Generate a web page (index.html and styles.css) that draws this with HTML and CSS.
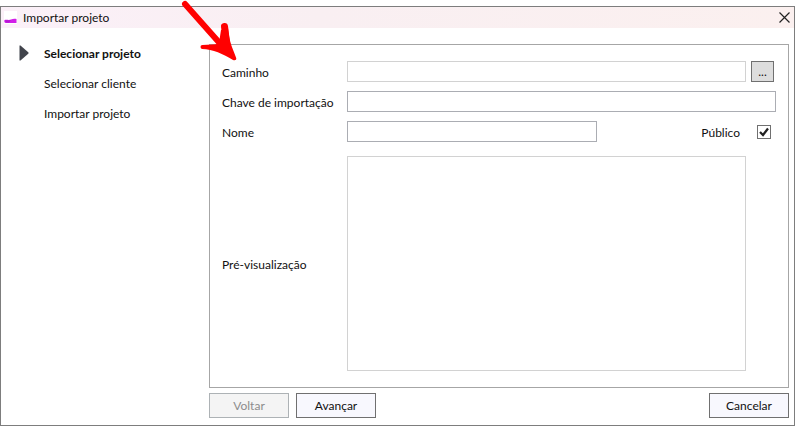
FILE: index.html
```html
<!DOCTYPE html>
<html lang="pt">
<head>
<meta charset="utf-8">
<title>Importar projeto</title>
<link rel="stylesheet" href="styles.css">
</head>
<body>
<div class="window">
  <header class="titlebar">
    <svg class="app-icon" width="13" height="13" viewBox="0 0 13 13" aria-hidden="true">
      <rect width="13" height="13" fill="#fff"/>
      <path d="M.5 9C3 8.500 5 9.500 7 8.500C9 7.500 11 7.500 12.500 8V12H2C.3 12 0 10 .5 9Z" fill="#d21ee8"/>
      <path d="M1 9.500C3 9 5 9.800 7 9L5 11.500H2Z" fill="#b416d2"/>
    </svg>
    <h1 class="title">Importar projeto</h1>
    <button class="close" type="button" aria-label="Fechar">
      <svg width="11" height="11" viewBox="0 0 11 11"><path d="M.5 .5L10.500 10.500M10.500 .5L.5 10.500" stroke="#222" stroke-width="1.200"/></svg>
    </button>
  </header>
  <form class="content">
    <ol class="steps">
      <li class="step current">
        <svg class="marker" width="10" height="16" viewBox="0 0 10 16" aria-hidden="true"><path d="M.5 .5H1.500L9.500 7.500V8.500L1.500 15.500H.5Z" fill="#41444c"/></svg>
        Selecionar projeto
      </li>
      <li class="step">Selecionar cliente</li>
      <li class="step">Importar projeto</li>
    </ol>
    <main class="main">
      <div class="panel">
        <div class="row">
          <label class="label" for="path">Caminho</label>
          <input class="field readonly" id="path" type="text" readonly>
          <button class="browse" type="button" aria-label="Procurar">...</button>
        </div>
        <div class="row">
          <label class="label" for="key">Chave de importação</label>
          <input class="field" id="key" type="text">
        </div>
        <div class="row">
          <label class="label" for="name">Nome</label>
          <input class="field name" id="name" type="text">
          <label class="public" for="public">Público</label>
          <span class="check">
            <input class="checkbox" id="public" type="checkbox" checked>
            <svg class="tick" width="14" height="14" viewBox="0 0 14 14" aria-hidden="true"><path d="M3 7L6 10L11 3.500" fill="none" stroke="#212121" stroke-width="2.200"/></svg>
          </span>
        </div>
        <div class="row preview-row">
          <label class="label" for="preview">Pré-visualização</label>
          <textarea class="field readonly preview" id="preview" readonly></textarea>
        </div>
      </div>
      <footer class="actions">
        <button class="button" type="button" disabled>Voltar</button>
        <button class="button" type="button">Avançar</button>
        <button class="button cancel" type="button">Cancelar</button>
      </footer>
    </main>
  </form>
</div>
<svg class="arrow" width="60" height="64" viewBox="0 0 60 64" aria-hidden="true">
  <path d="M6 4L45 48" stroke="#f00" stroke-width="6" stroke-linecap="round"/>
  <path d="M45.500 26.500L48 46" fill="none" stroke="#f00" stroke-width="7" stroke-linecap="round"/>
  <path d="M23.500 47L42 46" fill="none" stroke="#f00" stroke-width="4" stroke-linecap="round"/>
  <path d="M23 49C34 49 44 54 54 60C56.500 61 58 59.500 57 57.500C55 51 50 43 49 28L42 30L40 43L34 46Z" fill="#f00"/>
</svg>
</body>
</html>
```
FILE: styles.css
```css
* {
  box-sizing: border-box;
}

body {
  margin: 0;
  padding: 6px 0 1px;
  min-height: 100vh;
  display: flex;
  background: #fff;
  color: #111;
  font: 12px/16px Lato, "Open Sans", sans-serif;
}

button,
input,
textarea {
  font: inherit;
  color: inherit;
  margin: 0;
  border-radius: 0;
}

.window {
  flex: 1;
  display: flex;
  flex-direction: column;
  border: 1px solid #7d7d7d;
}

.titlebar {
  display: flex;
  align-items: center;
  gap: 6px;
  height: 21px;
  padding: 0 4px 0 3px;
  background: linear-gradient(90deg, #fbf0f8, #f9eff2 40%, #fbf0ef);
}

.title {
  flex: 1;
  margin: 0;
  font-size: 12px;
  font-weight: 400;
}

.close {
  display: flex;
  padding: 0;
  border: 0;
  background: none;
}

.content {
  flex: 1;
  display: flex;
  padding: 0 5px 7px 0;
}

.steps {
  flex: 0 0 208px;
  margin: 0;
  padding: 11px 0 0 43px;
  list-style: none;
}

.step {
  position: relative;
  line-height: 30px;
}

.current {
  font-weight: 700;
}

.marker {
  position: absolute;
  left: -25px;
  top: 6px;
}

.main {
  flex: 1;
  display: flex;
  flex-direction: column;
  gap: 5px;
  padding-top: 16px;
}

.panel {
  flex: 1;
  display: flex;
  flex-direction: column;
  gap: 9px;
  padding: 16px 12px;
  border: 1px solid #a6a6a6;
}

.row {
  display: flex;
  align-items: center;
}

.label {
  flex: 0 0 125px;
  padding-top: 2px;
}

.field {
  flex: 1;
  min-width: 0;
  height: 21px;
  padding: 0 4px;
  border: 1px solid #abadb3;
  background: #fff;
}

.readonly {
  border-color: #d2d2d2;
}

.browse {
  width: 23px;
  height: 21px;
  margin: 0 2px 0 5px;
  padding: 0;
  border: 1px solid #707070;
  background: #ddd;
}

.name {
  flex: 0 1 250px;
}

.public {
  margin-left: auto;
  padding-top: 2px;
}

.check {
  position: relative;
  width: 14px;
  height: 14px;
  margin: 0 5px 0 17px;
}

.checkbox {
  display: block;
  width: 14px;
  height: 14px;
  appearance: none;
  border: 1px solid #707070;
  background: #fff;
}

.tick {
  position: absolute;
  inset: 0;
  pointer-events: none;
}

.checkbox:not(:checked) + .tick {
  display: none;
}

.preview-row {
  flex: 1;
  margin: 5px 30px 0 0;
}

.preview {
  align-self: stretch;
  height: auto;
  resize: none;
}

.actions {
  display: flex;
  gap: 7px;
}

.button {
  width: 80px;
  height: 25px;
  padding: 0;
  border: 1px solid #707070;
  background: #f8f8fe;
}

.button:disabled {
  border-color: #adb2b5;
  background: #f4f4f4;
  color: #8c8c8c;
}

.cancel {
  margin-left: auto;
}

.arrow {
  position: absolute;
  left: 179px;
  top: 0;
  pointer-events: none;
}
```
